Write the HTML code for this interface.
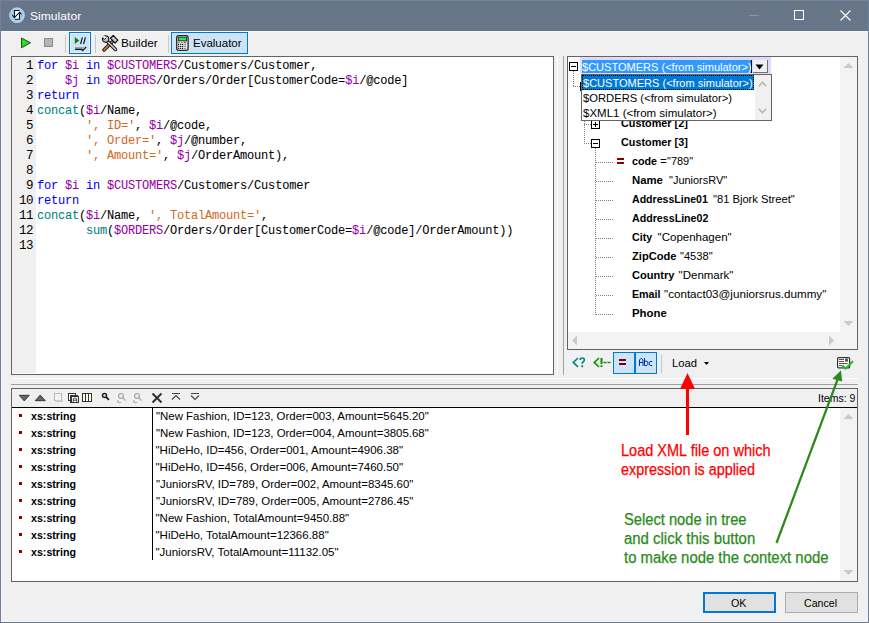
<!DOCTYPE html>
<html><head><meta charset="utf-8">
<style>
*{margin:0;padding:0;box-sizing:border-box}
html,body{width:869px;height:623px;overflow:hidden;background:#687689}
body{position:relative;font-family:"Liberation Sans",sans-serif;font-size:11.5px;color:#000}
.a{position:absolute}
.t{position:absolute;white-space:pre;line-height:14px;transform-origin:0 0}
#win{position:absolute;left:1px;top:31px;width:867px;height:591px;background:#f0f0f0;border-left:1px solid #f8f8f8;border-top:1px solid #f8f8f8;border-bottom:1px solid #f8f8f8}
.box{position:absolute;border:1px solid #646464;background:#fff}
.code{position:absolute;left:37px;top:59px;font-family:"Liberation Mono",monospace;font-size:12px;letter-spacing:-0.2px;line-height:15px;white-space:pre;color:#000;-webkit-text-stroke:0.05px currentColor}
.gut{position:absolute;left:12px;top:57px;width:24px;height:316px;background:#f0f0f0}
.ln{position:absolute;left:11px;top:59px;width:22px;text-align:right;font-family:"Liberation Mono",monospace;font-size:12.5px;letter-spacing:-0.5px;line-height:15px;white-space:pre;color:#000}
.k{color:#0000ff}.v{color:#9600a8}.f{color:#007f7f}.s{color:#d2691e}
.b{font-weight:bold}
.dv{position:absolute;width:1px;background:repeating-linear-gradient(to bottom,#808080 0,#808080 1px,transparent 1px,transparent 2px)}
.dh{position:absolute;height:1px;background:repeating-linear-gradient(to right,#808080 0,#808080 1px,transparent 1px,transparent 2px)}
.exp{position:absolute;width:9px;height:9px;border:1px solid #000;background:#fff}
.exp .m{position:absolute;left:1px;top:3px;width:5px;height:1px;background:#000}
.exp .p{position:absolute;left:3px;top:1px;width:1px;height:5px;background:#000}
.btn{position:absolute;background:#cce4f7;border:1px solid #0078d7}
.sep{position:absolute;width:1px;background:#c8c8c8}
</style></head><body>
<svg class="a" style="left:8px;top:6px" width="18" height="18" viewBox="0 0 18 18">
<circle cx="9" cy="9.2" r="7.4" fill="#9ccff5" stroke="#c4e2fa" stroke-width="0.8"/>
<rect x="6.5" y="4.5" width="5" height="8.8" fill="#fff"/>
<path d="M6.5 11.2 V4.5 H11.5 M11.5 6.5 V13.3 H6.8" fill="none" stroke="#1a1a1a" stroke-width="1.1"/>
<path d="M4.3 9.2 L6.5 11.6 L11.5 6.2 L13.6 8.4" fill="none" stroke="#1a1a1a" stroke-width="1.1"/>
</svg>
<div class="t" id="t0" style="left:30px;top:9px;color:#fff;transform:scaleX(1.0540)">Simulator</div>
<div class="a" style="left:749px;top:15px;width:10px;height:1px;background:#8a96a6"></div>
<div class="a" style="left:794px;top:10px;width:10px;height:10px;border:1px solid #fff"></div>
<svg class="a" style="left:840px;top:10px" width="11" height="11" viewBox="0 0 11 11"><path d="M0.5 0.5 L10.5 10.5 M10.5 0.5 L0.5 10.5" stroke="#fff" stroke-width="1.1"/></svg>
<div id="win"></div>
<div class="a" style="left:0;top:0;width:869px;height:1px;background:#75829a"></div>
<div class="a" style="left:0;top:0;width:1px;height:623px;background:#71809a"></div>
<div class="a" style="left:868px;top:0;width:1px;height:623px;background:#71809a"></div>
<svg class="a" style="left:20px;top:37px" width="12" height="12" viewBox="0 0 12 12"><path d="M1.5 1 L10.5 5.8 L1.5 10.8 Z" fill="#22e01e" stroke="#1a3a1a" stroke-width="0.9" stroke-linejoin="round"/></svg>
<div class="a" style="left:44px;top:38px;width:9px;height:9px;background:#b4b4b4;border:1px solid #8c8c8c"></div>
<div class="sep" style="left:65px;top:35px;height:18px"></div>
<div class="btn" style="left:69px;top:32px;width:22px;height:22px"></div>
<svg class="a" style="left:69px;top:32px" width="22" height="22" viewBox="0 0 22 22">
<rect x="1.5" y="1.5" width="19" height="19" fill="none" stroke="#e6f1fb" stroke-width="1"/>
<path d="M5.8 5 L10.3 8.5 L5.8 12 Z" fill="#108010"/>
<path d="M11.6 12 L13.4 5.3 M14.6 12 L16.4 5.3" stroke="#111" stroke-width="1.15"/>
<rect x="6" y="15" width="9" height="1.2" fill="#a0a0a0"/>
<path d="M6 17.3 H13.5" stroke="#111" stroke-width="1.4"/>
<path d="M12.8 17.6 L13.6 18.6 L17.2 15" fill="none" stroke="#111" stroke-width="1.1"/>
</svg>
<div class="sep" style="left:95px;top:35px;height:18px"></div>
<svg class="a" style="left:101px;top:34px" width="18" height="18" viewBox="0 0 18 18">
<path d="M3 16 L11 8" stroke="#111" stroke-width="3.4" stroke-linecap="round"/>
<path d="M3 16 L11 8" stroke="#f08a1a" stroke-width="1.6" stroke-linecap="round"/>
<path d="M12.2 1.3 L16.9 6.2 L14.1 9.1 L9.4 4.2 Z" fill="#b8c4d8" stroke="#111" stroke-width="1.2" stroke-linejoin="round"/>
<path d="M3.5 4.5 L14.5 15.5" stroke="#111" stroke-width="3.4" stroke-linecap="round"/>
<path d="M3.5 4.5 L14.5 15.5" stroke="#c8d4e8" stroke-width="1.6" stroke-linecap="round"/>
<circle cx="4.6" cy="5" r="3.2" fill="#b8c4d8" stroke="#111" stroke-width="1.1"/>
<path d="M1.2 3.2 L3.4 5.4 L5.2 3.6 L3 1.4 Z" fill="#f0f0f0"/>
<path d="M1.6 3.9 L3.4 5.5 L5.0 3.9" fill="none" stroke="#111" stroke-width="1"/>
</svg>
<div class="t" id="t1" style="left:121px;top:36px;;transform:scaleX(1.0248)">Builder</div>
<div class="sep" style="left:168px;top:35px;height:18px"></div>
<div class="btn" style="left:171px;top:32px;width:77px;height:22px"></div>
<svg class="a" style="left:176px;top:35px" width="13" height="16" viewBox="0 0 13 16">
<rect x="0.7" y="0.7" width="11.4" height="14.6" rx="1.6" fill="#e6e6e6" stroke="#2a2a2a" stroke-width="1.3"/>
<rect x="2.3" y="2.2" width="8.2" height="3.6" fill="#20f050" stroke="#222" stroke-width="0.9"/>
<g fill="#8a8a8a"><rect x="1.9" y="6.9" width="2" height="1"/><rect x="4.9" y="6.9" width="2" height="1"/>
<rect x="8" y="8.9" width="2" height="1"/><rect x="8" y="10.9" width="2" height="1"/><rect x="8" y="12.9" width="2" height="1"/></g>
<rect x="7.9" y="6.8" width="2.2" height="1.2" fill="#f02020"/>
<g fill="#222"><rect x="2" y="8.8" width="1.2" height="1.2"/><rect x="4" y="8.8" width="1.2" height="1.2"/><rect x="6" y="8.8" width="1.2" height="1.2"/>
<rect x="2" y="10.8" width="1.2" height="1.2"/><rect x="4" y="10.8" width="1.2" height="1.2"/><rect x="6" y="10.8" width="1.2" height="1.2"/>
<rect x="2" y="12.8" width="1.2" height="1.2"/><rect x="4" y="12.8" width="1.2" height="1.2"/><rect x="6" y="12.8" width="1.2" height="1.2"/></g>
</svg>
<div class="t" id="t2" style="left:193px;top:36px;">Evaluator</div>
<div class="box" style="left:11px;top:56px;width:543px;height:319px"></div>
<div class="gut"></div>
<div class="ln">1
2
3
4
5
6
7
8
9
10
11
12
13</div>
<div class="code"><span class="k">for</span> <span class="v">$i</span> <span class="k">in</span> <span class="v">$CUSTOMERS</span>/Customers/Customer,
    <span class="v">$j</span> <span class="k">in</span> <span class="v">$ORDERS</span>/Orders/Order[CustomerCode=<span class="v">$i</span>/@code]
<span class="k">return</span>
<span class="f">concat</span>(<span class="v">$i</span>/Name,
       <span class="s">', ID='</span>, <span class="v">$i</span>/@code,
       <span class="s">', Order='</span>, <span class="v">$j</span>/@number,
       <span class="s">', Amount='</span>, <span class="v">$j</span>/OrderAmount),

<span class="k">for</span> <span class="v">$i</span> <span class="k">in</span> <span class="v">$CUSTOMERS</span>/Customers/Customer
<span class="k">return</span>
<span class="f">concat</span>(<span class="v">$i</span>/Name, <span class="s">', TotalAmount='</span>,
       <span class="f">sum</span>(<span class="v">$ORDERS</span>/Orders/Order[CustomerCode=<span class="v">$i</span>/@code]/OrderAmount))
</div>
<div class="a" style="left:557px;top:56px;width:1px;height:319px;background:#fff"></div>
<div class="a" style="left:563px;top:56px;width:1px;height:319px;background:#a0a0a0"></div>
<div class="a" style="left:11px;top:378px;width:847px;height:1px;background:#fff"></div>
<div class="a" style="left:11px;top:384px;width:847px;height:1px;background:#a0a0a0"></div>
<div class="box" style="left:567px;top:56px;width:291px;height:294px"></div>
<div class="a" style="left:840px;top:57px;width:17px;height:275px;background:#f3f3f3"></div>
<div class="a" style="left:568px;top:332px;width:289px;height:17px;background:#f3f3f3"></div>
<svg class="a" style="left:843px;top:62px" width="11" height="7"><path d="M0.5 6 L5.5 1 L10.5 6 Z" fill="#c8c8d0"/></svg>
<svg class="a" style="left:843px;top:320px" width="11" height="7"><path d="M0.5 1 L5.5 6 L10.5 1 Z" fill="#c8c8d0"/></svg>
<svg class="a" style="left:828px;top:335px" width="7" height="11"><path d="M1 0.5 L6 5.5 L1 10.5 Z" fill="#c8c8d0"/></svg>
<svg class="a" style="left:571px;top:335px" width="7" height="11"><path d="M6 0.5 L1 5.5 L6 10.5 Z" fill="#c8c8d0"/></svg>
<div class="dv" style="left:573px;top:71px;height:16px"></div>
<div class="dh" style="left:573px;top:86px;width:7px"></div>
<div class="dv" style="left:584px;top:91px;height:53px"></div>
<div class="dh" style="left:584px;top:105px;width:7px"></div>
<div class="dh" style="left:584px;top:124px;width:7px"></div>
<div class="dh" style="left:584px;top:143px;width:7px"></div>
<div class="dv" style="left:595px;top:148px;height:167px"></div>
<div class="dh" style="left:596px;top:162px;width:18px"></div>
<div class="dh" style="left:596px;top:181px;width:18px"></div>
<div class="dh" style="left:596px;top:200px;width:18px"></div>
<div class="dh" style="left:596px;top:219px;width:18px"></div>
<div class="dh" style="left:596px;top:238px;width:18px"></div>
<div class="dh" style="left:596px;top:257px;width:18px"></div>
<div class="dh" style="left:596px;top:276px;width:18px"></div>
<div class="dh" style="left:596px;top:295px;width:18px"></div>
<div class="dh" style="left:596px;top:314px;width:18px"></div>
<div class="exp" style="left:569px;top:62px"><i class="m"></i></div>
<div class="exp" style="left:580px;top:82px"><i class="m"></i></div>
<div class="exp" style="left:591px;top:101px"><i class="m"></i><i class="p"></i></div>
<div class="exp" style="left:591px;top:120px"><i class="m"></i><i class="p"></i></div>
<div class="exp" style="left:591px;top:139px"><i class="m"></i></div>
<div class="t" id="t3" style="left:621px;top:97px;font-weight:bold;transform:scaleX(0.9417)">Customer [1]</div>
<div class="t" id="t4" style="left:621px;top:116px;font-weight:bold;transform:scaleX(0.9417)">Customer [2]</div>
<div class="t" id="t5" style="left:621px;top:135px;font-weight:bold;transform:scaleX(0.9417)">Customer [3]</div>
<div class="a" style="left:617px;top:158px;width:7px;height:2px;background:#800000"></div>
<div class="a" style="left:617px;top:162px;width:7px;height:2px;background:#800000"></div>
<div class="t" id="t6" style="left:632px;top:154px;font-weight:bold;transform:scaleX(0.9350)">code</div>
<div class="t" id="t7" style="left:660px;top:154px;">=</div>
<div class="t" id="t8" style="left:667.0px;top:154px;;transform:scaleX(0.9540)">"789"</div>
<div class="t" id="t9" style="left:632px;top:173px;font-weight:bold;transform:scaleX(0.9863)">Name</div>
<div class="t" id="t10" style="left:668.8px;top:173px;;transform:scaleX(0.9539)">"JuniorsRV"</div>
<div class="t" id="t11" style="left:632px;top:192px;font-weight:bold;transform:scaleX(0.9205)">AddressLine01</div>
<div class="t" id="t12" style="left:713.3px;top:192px;;transform:scaleX(0.9699)">"81 Bjork Street"</div>
<div class="t" id="t13" style="left:632px;top:211px;font-weight:bold;transform:scaleX(0.9266)">AddressLine02</div>
<div class="t" id="t14" style="left:632px;top:230px;font-weight:bold;transform:scaleX(0.9294)">City</div>
<div class="t" id="t15" style="left:657.6px;top:230px;">"Copenhagen"</div>
<div class="t" id="t16" style="left:632px;top:249px;font-weight:bold;transform:scaleX(0.9674)">ZipCode</div>
<div class="t" id="t17" style="left:680.3px;top:249px;;transform:scaleX(0.9659)">"4538"</div>
<div class="t" id="t18" style="left:632px;top:268px;font-weight:bold;transform:scaleX(0.9639)">Country</div>
<div class="t" id="t19" style="left:678.6px;top:268px;">"Denmark"</div>
<div class="t" id="t20" style="left:632px;top:287px;font-weight:bold;transform:scaleX(0.9287)">Email</div>
<div class="t" id="t21" style="left:664.3px;top:287px;;transform:scaleX(1.0114)">"contact03@juniorsrus.dummy"</div>
<div class="t" id="t22" style="left:632px;top:306px;font-weight:bold;transform:scaleX(0.9903)">Phone</div>
<div class="a" style="left:580px;top:57px;width:191px;height:17px;background:#dcdcfa"></div>
<div class="a" style="left:582px;top:60px;width:170px;height:13px;background:#3399ff"></div>
<div class="a" style="left:751px;top:60px;width:1px;height:13px;background:#000"></div>
<div class="t" id="t23" style="left:582px;top:60px;color:#fff;transform:scaleX(0.9593)">$CUSTOMERS (&lt;from simulator&gt;)</div>
<div class="a" style="left:753px;top:60px;width:15px;height:13px;background:#f0f0f0;border-right:1px solid #707070;border-bottom:1px solid #707070"></div>
<svg class="a" style="left:755px;top:64px" width="9" height="6"><path d="M0.5 0.5 H8.5 L4.5 5.5 Z" fill="#000"/></svg>
<div class="a" style="left:581px;top:74px;width:191px;height:47px;background:#fff;border:1px solid #646464"></div>
<div class="a" style="left:582px;top:75px;width:172px;height:15px;background:#0078d7;outline:1px dotted #000;outline-offset:-1px"></div>
<div class="a" style="left:755px;top:75px;width:16px;height:45px;background:#f0f0f0"></div>
<svg class="a" style="left:758px;top:81px" width="9" height="6"><path d="M0.8 5.2 L4.5 1.2 L8.2 5.2" fill="none" stroke="#b0b0b0" stroke-width="1.3"/></svg>
<svg class="a" style="left:758px;top:108px" width="9" height="6"><path d="M0.8 0.8 L4.5 4.8 L8.2 0.8" fill="none" stroke="#b0b0b0" stroke-width="1.3"/></svg>
<div class="t" id="t24" style="left:583px;top:76px;color:#fff;transform:scaleX(0.9593)">$CUSTOMERS (&lt;from simulator&gt;)</div>
<div class="t" id="t25" style="left:583px;top:91px;;transform:scaleX(0.9755)">$ORDERS (&lt;from simulator&gt;)</div>
<div class="t" id="t26" style="left:583px;top:106px;">$XML1 (&lt;from simulator&gt;)</div>
<svg class="a" style="left:570px;top:355px" width="42" height="14" viewBox="0 0 42 14">
<path d="M8 3 L3.3 7.4 L8 12" fill="none" stroke="#008080" stroke-width="1.6"/>
<path d="M10.2 5 Q10.2 3 12.2 3 Q14.3 3 14.3 5 Q14.3 6.3 13 7 Q12.2 7.5 12.2 8.8" fill="none" stroke="#008080" stroke-width="1.7"/>
<rect x="11.2" y="10.3" width="2" height="1.8" fill="#008080"/>
<path d="M29 3 L24.3 7.4 L29 12" fill="none" stroke="#009000" stroke-width="1.6"/>
<rect x="30.5" y="3" width="2" height="6" fill="#009000"/>
<rect x="30.5" y="10.3" width="2" height="1.8" fill="#009000"/>
<rect x="33.5" y="6.8" width="3" height="1.4" fill="#009000"/>
<rect x="37.5" y="6.8" width="3" height="1.4" fill="#009000"/>
</svg>
<div class="btn" style="left:613px;top:352px;width:22px;height:22px"></div>
<div class="btn" style="left:635px;top:352px;width:22px;height:22px"></div>
<div class="a" style="left:619px;top:359px;width:7px;height:2px;background:#800000"></div>
<div class="a" style="left:619px;top:363px;width:7px;height:2px;background:#800000"></div>
<div class="sep" style="left:661px;top:355px;height:18px"></div>
<svg class="a" style="left:637px;top:357px" width="18" height="11" viewBox="0 0 18 11">
<path d="M2.5 9 V3 L3.8 1.5 H4.7 L6 3 V9 M2.5 5.5 H6" fill="none" stroke="#0030c0" stroke-width="1"/>
<path d="M7.5 1 V8.5 H10 L10.8 7.7 V5 L10 4.2 H7.5" fill="none" stroke="#0030c0" stroke-width="1"/>
<path d="M15.2 4.5 H13 L12.3 5.2 V7.8 L13 8.5 H15.2" fill="none" stroke="#0030c0" stroke-width="1"/>
</svg>
<div class="t" id="t27" style="left:672px;top:356px;;transform:scaleX(0.9768)">Load</div>
<svg class="a" style="left:704px;top:362px" width="6" height="4"><path d="M0 0 H5 L2.5 3 Z" fill="#000"/></svg>
<svg class="a" style="left:836px;top:356px" width="18" height="15" viewBox="0 0 18 15">
<rect x="1.6" y="1.6" width="12" height="10.3" rx="1" fill="#fff" stroke="#333" stroke-width="1.2"/>
<rect x="3" y="3" width="5" height="1" fill="#555"/><rect x="3" y="5" width="5" height="1" fill="#555"/>
<rect x="3" y="7" width="8.5" height="1" fill="#555"/><rect x="3" y="9" width="3" height="1" fill="#555"/>
<rect x="9" y="2.6" width="3" height="3" fill="#555"/>
<path d="M6.3 9.2 L9.5 12.6 L17 5.2" fill="none" stroke="#1fc01f" stroke-width="2"/>
</svg>
<div class="box" style="left:11px;top:388px;width:847px;height:194px;background:#f0f0f0"></div>
<div class="a" style="left:12px;top:407px;width:845px;height:1px;background:#000"></div>
<div class="a" style="left:12px;top:408px;width:845px;height:173px;background:#fff"></div>
<div class="a" style="left:840px;top:408px;width:17px;height:173px;background:#f3f3f3"></div>
<svg class="a" style="left:843px;top:413px" width="11" height="7"><path d="M0.5 6 L5.5 1 L10.5 6 Z" fill="#c8c8d0"/></svg>
<svg class="a" style="left:843px;top:569px" width="11" height="7"><path d="M0.5 1 L5.5 6 L10.5 1 Z" fill="#c8c8d0"/></svg>
<div class="a" style="left:152px;top:408px;width:1px;height:152px;background:#000"></div>
<svg class="a" style="left:17px;top:392px" width="190" height="14" viewBox="0 0 190 14">
<path d="M2.2 3.3 H12.3 L7.25 9 Z" fill="#666" stroke="#222" stroke-width="0.8" stroke-linejoin="round"/>
<path d="M18.2 8.7 H28.3 L23.25 3 Z" fill="#666" stroke="#222" stroke-width="0.8" stroke-linejoin="round"/>
<rect x="37.5" y="1.5" width="7" height="7" fill="#f4f4f4" stroke="#b8b8b8"/>
<rect x="39" y="8" width="7" height="2" fill="#ccc"/>
<rect x="51.5" y="1.5" width="7" height="7" fill="#fff" stroke="#333"/>
<rect x="53.5" y="3.5" width="7" height="7" fill="#fff" stroke="#333"/>
<rect x="54.5" y="4.5" width="7" height="6" fill="#fff" stroke="#333"/><path d="M56.3 9.8 V6.8 Q58 5 59.7 6.8 V9.8 M56.3 8.2 H59.7" fill="none" stroke="#333" stroke-width="0.9"/>
<rect x="65.5" y="1.5" width="9" height="8" fill="#fffbee" stroke="#333"/>
<path d="M68.5 2 V9 M71.5 2 V9" stroke="#333"/>
<circle cx="87.5" cy="3.6" r="2" fill="none" stroke="#222" stroke-width="1.5"/>
<path d="M89 5 L92 7.8" stroke="#222" stroke-width="1.8"/>
<circle cx="104" cy="4" r="2.4" fill="none" stroke="#aaa" stroke-width="1.3"/>
<path d="M105.5 5.5 L108.5 8.5 M101 8 V10.5 H104" fill="none" stroke="#aaa" stroke-width="1.2"/>
<circle cx="120" cy="4" r="2.4" fill="none" stroke="#aaa" stroke-width="1.3"/>
<path d="M121.5 5.5 L124.5 8.5 M117 8 V10.5 H120" fill="none" stroke="#aaa" stroke-width="1.2"/>
<path d="M135.5 1.5 L144.5 10.5 M144.5 1.5 L135.5 10.5" stroke="#333" stroke-width="2"/>
<path d="M155 1.5 H163 M155 7.5 L159 3.5 L163 7.5" fill="none" stroke="#444" stroke-width="1.1"/>
<path d="M174 1.5 H182 M174 3.5 L178 7.5 L182 3.5" fill="none" stroke="#444" stroke-width="1.1"/>
</svg>
<div class="t" id="t28" style="left:818px;top:391px;;transform:scaleX(0.9118)">Items: 9</div>
<div class="a" style="left:19px;top:414px;width:3px;height:3px;background:#8b0000"></div>
<div class="t" id="t29" style="left:30.5px;top:409px;font-weight:bold;transform:scaleX(0.9263)">xs:string</div>
<div class="t" id="t30" style="left:155.5px;top:409px;;transform:scaleX(0.9937)">"New Fashion, ID=123, Order=003, Amount=5645.20"</div>
<div class="a" style="left:19px;top:431px;width:3px;height:3px;background:#8b0000"></div>
<div class="t" id="t31" style="left:30.5px;top:426px;font-weight:bold;transform:scaleX(0.9263)">xs:string</div>
<div class="t" id="t32" style="left:155.5px;top:426px;;transform:scaleX(0.9940)">"New Fashion, ID=123, Order=004, Amount=3805.68"</div>
<div class="a" style="left:19px;top:448px;width:3px;height:3px;background:#8b0000"></div>
<div class="t" id="t33" style="left:30.5px;top:443px;font-weight:bold;transform:scaleX(0.9263)">xs:string</div>
<div class="t" id="t34" style="left:155.5px;top:443px;">"HiDeHo, ID=456, Order=001, Amount=4906.38"</div>
<div class="a" style="left:19px;top:465px;width:3px;height:3px;background:#8b0000"></div>
<div class="t" id="t35" style="left:30.5px;top:460px;font-weight:bold;transform:scaleX(0.9263)">xs:string</div>
<div class="t" id="t36" style="left:155.5px;top:460px;">"HiDeHo, ID=456, Order=006, Amount=7460.50"</div>
<div class="a" style="left:19px;top:482px;width:3px;height:3px;background:#8b0000"></div>
<div class="t" id="t37" style="left:30.5px;top:477px;font-weight:bold;transform:scaleX(0.9263)">xs:string</div>
<div class="t" id="t38" style="left:155.5px;top:477px;;transform:scaleX(0.9930)">"JuniorsRV, ID=789, Order=002, Amount=8345.60"</div>
<div class="a" style="left:19px;top:499px;width:3px;height:3px;background:#8b0000"></div>
<div class="t" id="t39" style="left:30.5px;top:494px;font-weight:bold;transform:scaleX(0.9263)">xs:string</div>
<div class="t" id="t40" style="left:155.5px;top:494px;;transform:scaleX(0.9930)">"JuniorsRV, ID=789, Order=005, Amount=2786.45"</div>
<div class="a" style="left:19px;top:516px;width:3px;height:3px;background:#8b0000"></div>
<div class="t" id="t41" style="left:30.5px;top:511px;font-weight:bold;transform:scaleX(0.9263)">xs:string</div>
<div class="t" id="t42" style="left:155.5px;top:511px;">"New Fashion, TotalAmount=9450.88"</div>
<div class="a" style="left:19px;top:533px;width:3px;height:3px;background:#8b0000"></div>
<div class="t" id="t43" style="left:30.5px;top:528px;font-weight:bold;transform:scaleX(0.9263)">xs:string</div>
<div class="t" id="t44" style="left:155.5px;top:528px;">"HiDeHo, TotalAmount=12366.88"</div>
<div class="a" style="left:19px;top:550px;width:3px;height:3px;background:#8b0000"></div>
<div class="t" id="t45" style="left:30.5px;top:545px;font-weight:bold;transform:scaleX(0.9263)">xs:string</div>
<div class="t" id="t46" style="left:155.5px;top:545px;">"JuniorsRV, TotalAmount=11132.05"</div>
<div class="a" style="left:703px;top:592px;width:73px;height:21px;background:#e1e1e1;border:2px solid #0078d7"></div>
<div class="a" style="left:785px;top:592px;width:73px;height:21px;background:#e1e1e1;border:1px solid #adadad"></div>
<div class="t" id="t47" style="left:731px;top:596px;;transform:scaleX(0.9263)">OK</div>
<div class="t" id="t48" style="left:804px;top:596px;;transform:scaleX(0.9215)">Cancel</div>
<svg class="a" style="left:0;top:0" width="869" height="623" viewBox="0 0 869 623">
<path d="M687.5 435 V386" stroke="#ff0000" stroke-width="3"/>
<path d="M680 389 L687.5 373 L695 389 Z" fill="#ff0000"/>
<path d="M776.5 543 L838.5 377" stroke="#2a8a1a" stroke-width="2.2"/>
<path d="M832.3 378.8 L841 370.5 L842.2 381.6 Z" fill="#2a8a1a"/>
</svg>
<div class="t" id="t49" style="left:621px;top:441px;font-size:16px;line-height:19px;color:#ff0000;-webkit-text-stroke:0.25px #ff0000;transform:scaleX(0.9075)">Load XML file on which</div>
<div class="t" id="t50" style="left:621px;top:460px;font-size:16px;line-height:19px;color:#ff0000;-webkit-text-stroke:0.25px #ff0000;transform:scaleX(0.8968)">expression is applied</div>
<div class="t" id="t51" style="left:623.5px;top:510px;font-size:16px;line-height:19px;color:#2a8a1a;-webkit-text-stroke:0.25px #2a8a1a;transform:scaleX(0.9181)">Select node in tree</div>
<div class="t" id="t52" style="left:623.5px;top:529px;font-size:16px;line-height:19px;color:#2a8a1a;-webkit-text-stroke:0.25px #2a8a1a;transform:scaleX(0.9336)">and click this button</div>
<div class="t" id="t53" style="left:623.5px;top:548px;font-size:16px;line-height:19px;color:#2a8a1a;-webkit-text-stroke:0.25px #2a8a1a;transform:scaleX(0.9307)">to make node the context node</div>
</body></html>
